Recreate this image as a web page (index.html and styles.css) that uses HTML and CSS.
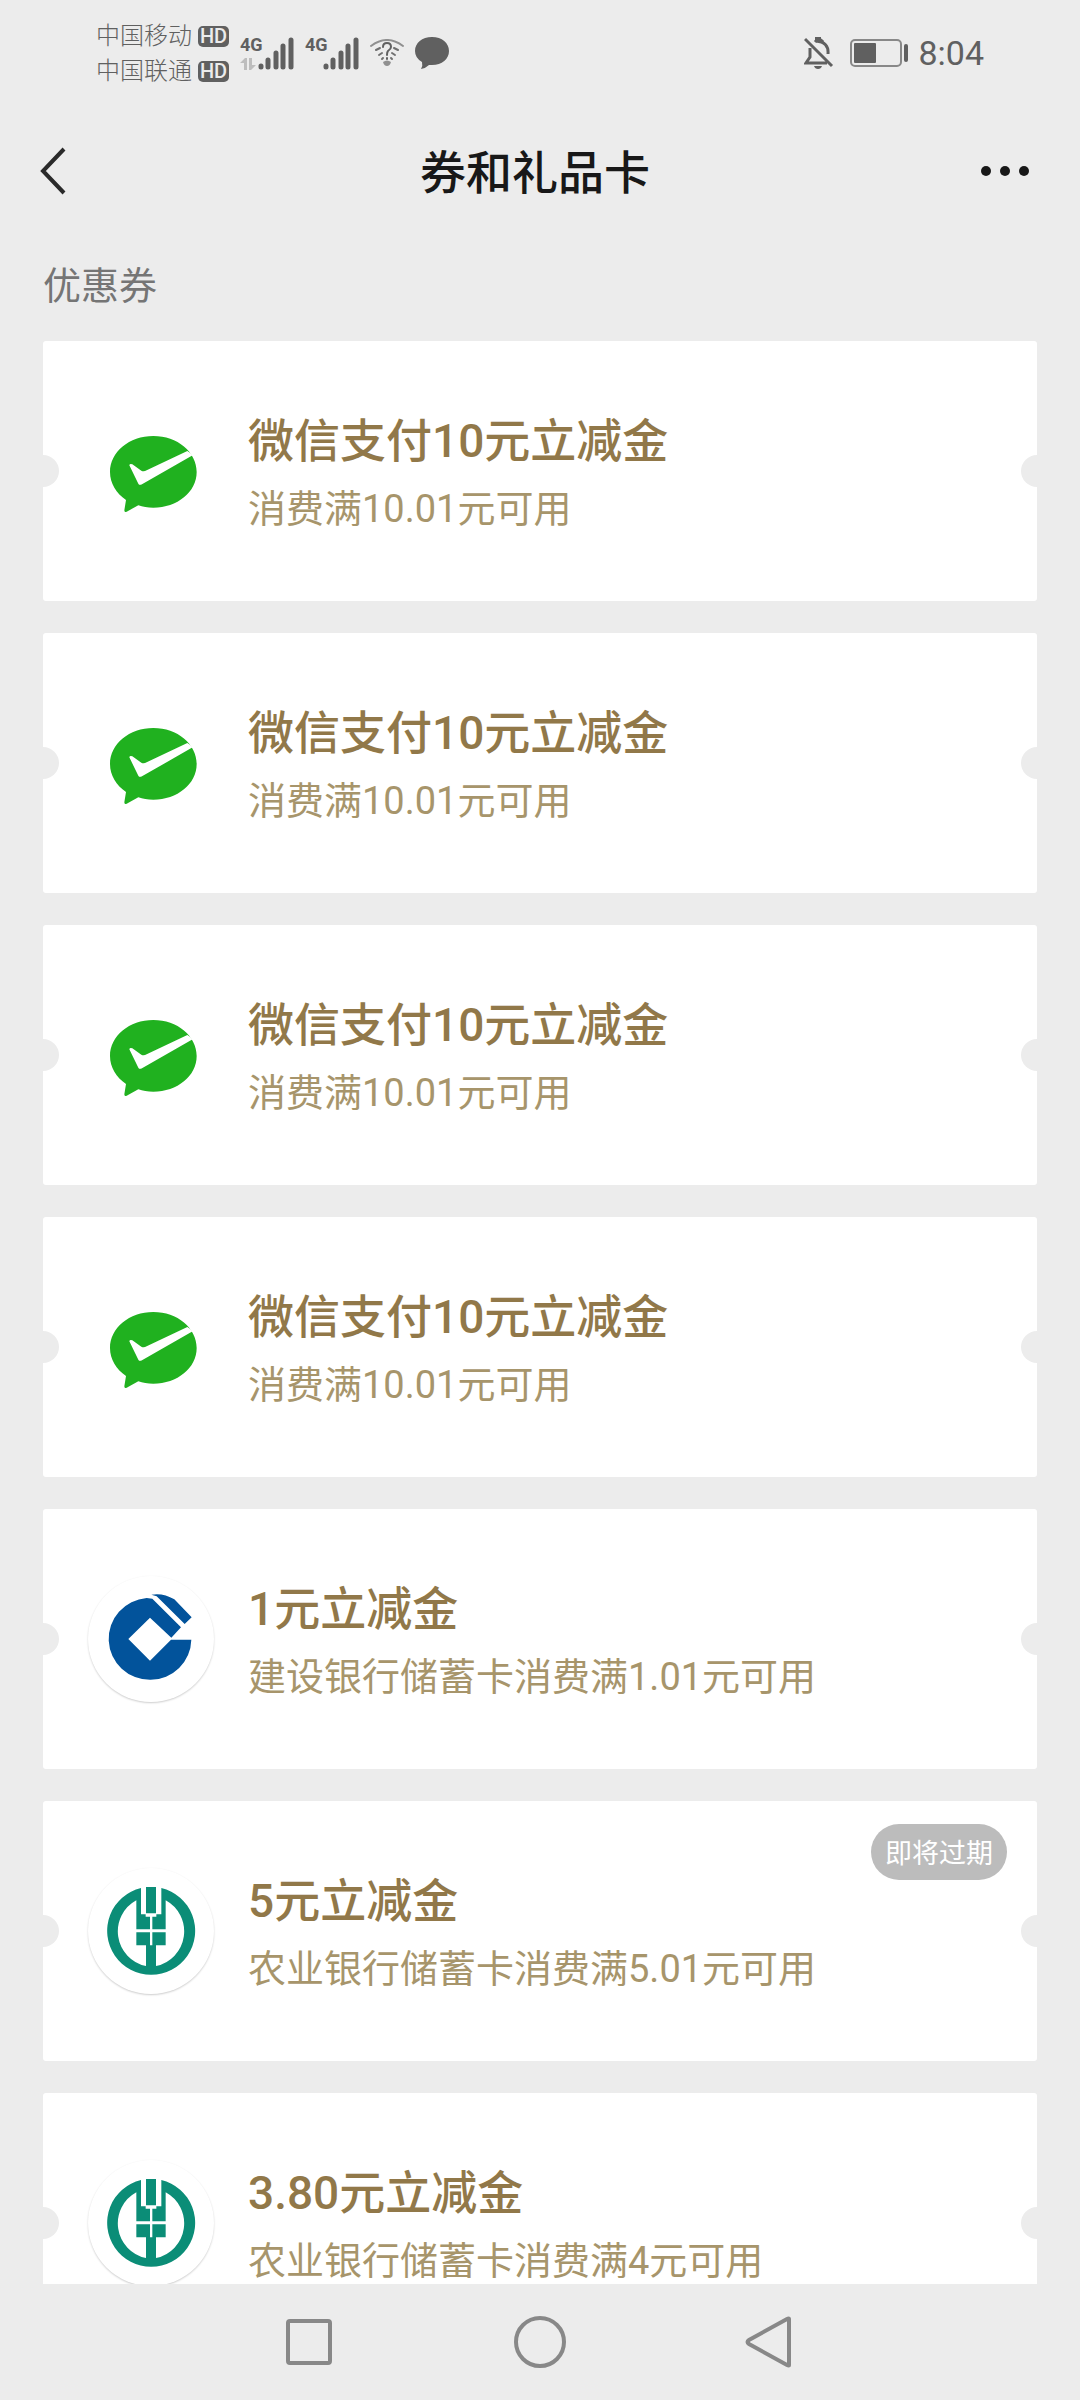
FILE: index.html
```html
<!DOCTYPE html>
<html lang="zh-CN">

<head>
    <meta charset="UTF-8">
    <meta name="viewport" content="width=device-width, initial-scale=1.0">
    <title>券和礼品卡</title>
    <link rel="stylesheet" href="styles.css">
</head>

<body>
    <!-- Shared logos -->
    <svg class="sprite" aria-hidden="true">
        <symbol id="logo-wechat" viewBox="174 234 378 378">
            <path fill="#20b11f" d="M370 318C442 318 500 366 500 426S442 533 370 533C353 533 338 530 325 526L290 545Q283 549 283 541L288 510C259 490 240 460 240 426C240 366 298 318 370 318Z" />
            <path fill="#fff" d="M298 406Q299 400 307 403L334 422Q341 426 350 421L472 363Q482 368 488 376L336 463Q328 467 325 461Z" />
        </symbol>
        <symbol id="logo-ccb" viewBox="24 21 378 378">
            <path fill="#02539b" d="M200 87L217 89L303 175L274 206L210 146L145 210L210 275L273 212H334A124 123 0 1 1 200 87Z" />
            <path fill="#02539b" d="M214 77Q250 71 283 91L335 145L314 165L230 82Z" />
        </symbol>
        <symbol id="logo-abc" viewBox="24 24 378 378">
            <path fill="#0b8d77" d="M183 84V163H197V170H210V208H169V121A106 106 0 0 0 198 318V256H169V217H210V256H217V217H257V256H228V318A106 106 0 0 0 257 121V208H217V170H229V163H244V84A132 132 0 1 1 183 84Z" />
            <path fill="#0b8d77" d="M198 81H228V160H198Z" />
        </symbol>
        <symbol id="signal-bars" viewBox="0 0 36 34">
            <path fill="none" stroke="#606060" stroke-width="5" stroke-linecap="round" d="M3 30V31M10 24V31M18 17V31M25 10V31M33 4V31" />
        </symbol>
    </svg>

    <div class="status-bar">
        <div class="carriers">
            <div class="carrier">中国移动<span class="hd">HD</span></div>
            <div class="carrier">中国联通<span class="hd">HD</span></div>
        </div>
        <div class="signal">
            <div class="network">
                <span>4G</span>
                <svg width="16" height="12" viewBox="0 0 16 12">
                    <path fill="#bdbdbd" d="M0 5L5 0H7V12H4V5ZM9 0H12V7H16L11 12H9Z" />
                </svg>
            </div>
            <svg width="36" height="34"><use href="#signal-bars" /></svg>
        </div>
        <div class="signal">
            <div class="network"><span>4G</span></div>
            <svg width="36" height="34"><use href="#signal-bars" /></svg>
        </div>
        <svg class="wifi" width="36" height="28" viewBox="0 0 36 28" fill="none" stroke-linecap="round">
            <path stroke="#909090" stroke-width="2" d="M2 7Q18 -5 34 7" />
            <path stroke="#707070" stroke-width="2" d="M7 11L11 9M25 9L29 11M10 16L13 14M23 14L26 16M13 20L14 19M22 19L23 20" />
            <path stroke="#606060" stroke-width="2" d="M14 8Q14 4 18 4T22 8Q22 10 19 12Q18 13 18 16M18 19V20" />
            <path fill="#909090" d="M14 23Q18 20 22 23Q21 27 18 27T14 23Z" />
        </svg>
        <svg class="bubble" width="34" height="32" viewBox="0 0 34 32">
            <path fill="#606060" d="M17 0C27 0 34 6 34 14S27 28 17 28H14Q11 31 6 32Q8 29 7 25Q0 21 0 14C0 6 7 0 17 0Z" />
        </svg>
        <div class="status-right">
            <svg width="30" height="34" viewBox="0 0 30 34" fill="none" stroke="#606060" stroke-width="3">
                <path d="M1 3L28 30M6 12V21L2 27H23M11 6Q15 1 19 6M12 5Q25 6 24 18" />
                <path fill="#606060" stroke="none" d="M11 1H17V5H11ZM10 30H18Q17 33 14 33T10 30Z" />
            </svg>
            <svg class="battery" width="58" height="28" viewBox="0 0 58 28">
                <rect x="1" y="1" width="50" height="26" rx="4" fill="none" stroke="#888" stroke-width="2" />
                <rect x="4" y="4" width="22" height="20" rx="1" fill="#606060" />
                <rect x="54" y="5" width="4" height="18" rx="2" fill="#606060" />
            </svg>
            <span class="time">8:04</span>
        </div>
    </div>

    <header class="header">
        <button class="icon-btn" aria-label="返回">
            <svg width="26" height="48" viewBox="0 0 26 48">
                <path fill="none" stroke="#2a2a2a" stroke-width="4" d="M24 2L3 24L24 46" />
            </svg>
        </button>
        <h1>券和礼品卡</h1>
        <button class="icon-btn more" aria-label="更多">
            <svg width="50" height="12" viewBox="0 0 50 12" fill="#181818">
                <circle cx="6" cy="6" r="5" />
                <circle cx="25" cy="6" r="5" />
                <circle cx="44" cy="6" r="5" />
            </svg>
        </button>
    </header>

    <main>
        <h2>优惠券</h2>
        <ul class="coupons">
            <li class="coupon">
                <svg class="logo"><use href="#logo-wechat" /></svg>
                <div class="info">
                    <h3>微信支付10元立减金</h3>
                    <p>消费满10.01元可用</p>
                </div>
            </li>
            <li class="coupon">
                <svg class="logo"><use href="#logo-wechat" /></svg>
                <div class="info">
                    <h3>微信支付10元立减金</h3>
                    <p>消费满10.01元可用</p>
                </div>
            </li>
            <li class="coupon">
                <svg class="logo"><use href="#logo-wechat" /></svg>
                <div class="info">
                    <h3>微信支付10元立减金</h3>
                    <p>消费满10.01元可用</p>
                </div>
            </li>
            <li class="coupon">
                <svg class="logo"><use href="#logo-wechat" /></svg>
                <div class="info">
                    <h3>微信支付10元立减金</h3>
                    <p>消费满10.01元可用</p>
                </div>
            </li>
            <li class="coupon">
                <svg class="logo bank"><use href="#logo-ccb" /></svg>
                <div class="info">
                    <h3>1元立减金</h3>
                    <p>建设银行储蓄卡消费满1.01元可用</p>
                </div>
            </li>
            <li class="coupon">
                <svg class="logo bank"><use href="#logo-abc" /></svg>
                <div class="info">
                    <h3>5元立减金</h3>
                    <p>农业银行储蓄卡消费满5.01元可用</p>
                </div>
                <span class="badge">即将过期</span>
            </li>
            <li class="coupon">
                <svg class="logo bank"><use href="#logo-abc" /></svg>
                <div class="info">
                    <h3>3.80元立减金</h3>
                    <p>农业银行储蓄卡消费满4元可用</p>
                </div>
            </li>
        </ul>
    </main>

    <nav class="system-nav">
        <button class="icon-btn" aria-label="最近任务">
            <svg width="52" height="52" viewBox="0 0 52 52">
                <rect x="4" y="5" width="42" height="42" rx="2" />
            </svg>
        </button>
        <button class="icon-btn" aria-label="主屏幕">
            <svg width="52" height="52" viewBox="0 0 52 52">
                <circle cx="26" cy="26" r="24" />
            </svg>
        </button>
        <button class="icon-btn" aria-label="后退">
            <svg width="52" height="52" viewBox="0 0 52 52">
                <path d="M45 3V49Q45 50 43 49L5 28Q2 26 5 24L43 3Q45 2 45 3Z" />
            </svg>
        </button>
    </nav>
</body>

</html>
```
FILE: styles.css
```css
* {
    box-sizing: border-box;
    margin: 0;
    padding: 0;
}

body {
    display: flex;
    flex-direction: column;
    height: 100vh;
    overflow: hidden;
    background-color: #ececec;
    color: #181818;
    font-family: Roboto, "Noto Sans CJK SC", sans-serif;
}

svg {
    display: block;
    flex-shrink: 0;
}

.sprite {
    position: absolute;
    width: 0;
    height: 0;
}

.icon-btn {
    background: none;
    border: none;
    cursor: pointer;
}

/* Status bar */
.status-bar {
    display: flex;
    align-items: center;
    height: 106px;
    padding: 0 96px;
    color: #606060;
}

.carriers {
    padding-top: 2px;
}

.carrier {
    display: flex;
    align-items: center;
    gap: 6px;
    font-size: 24px;
    font-weight: 300;
    line-height: 35px;
}

.hd {
    width: 31px;
    height: 21px;
    border-radius: 5px;
    background-color: #606060;
    color: #ececec;
    font-size: 20px;
    font-weight: 500;
    line-height: 21px;
    text-align: center;
}

.signal {
    display: flex;
    align-items: flex-end;
    margin-left: 11px;
}

.network {
    display: flex;
    flex-direction: column;
    justify-content: space-between;
    width: 18px;
    height: 34px;
    font-size: 18px;
    font-weight: 700;
    line-height: 18px;
}

.wifi {
    margin-left: 10px;
}

.bubble {
    margin-left: 10px;
}

.status-right {
    display: flex;
    align-items: center;
    margin-left: auto;
}

.battery {
    margin-left: 16px;
}

.time {
    margin-left: 10px;
    font-size: 34px;
}

/* Title bar */
.header {
    display: grid;
    grid-template-columns: 1fr auto 1fr;
    align-items: center;
    justify-items: start;
    height: 130px;
    padding: 0 50px 0 40px;
}

.header h1 {
    padding-top: 4px;
    font-size: 46px;
    font-weight: 500;
    line-height: 64px;
}

.more {
    justify-self: end;
}

main {
    flex: 1;
    min-height: 0;
    overflow: hidden;
    padding: 0 43px;
}

main h2 {
    height: 105px;
    color: #757575;
    font-size: 38px;
    font-weight: 400;
    line-height: 100px;
}

/* Coupons */
.coupons {
    display: flex;
    flex-direction: column;
    gap: 32px;
    list-style: none;
}

.coupon {
    position: relative;
    display: flex;
    flex-shrink: 0;
    align-items: center;
    gap: 34px;
    height: 260px;
    padding: 0 45px;
    border-radius: 3px;
    background-color: #fff;
    overflow: hidden;
}

/* Ticket notches on both edges */
.coupon::before,
.coupon::after {
    content: "";
    position: absolute;
    top: 114px;
    width: 32px;
    height: 32px;
    border-radius: 50%;
    background-color: #ececec;
}

.coupon::before {
    left: -16px;
}

.coupon::after {
    right: -16px;
}

.logo {
    width: 126px;
    height: 126px;
    border-radius: 50%;
}

.bank {
    box-shadow: 0 1px 2px rgba(0, 0, 0, 0.2);
}

.info {
    padding-top: 8px;
}

.info h3 {
    color: #917849;
    font-size: 46px;
    font-weight: 500;
    line-height: 68px;
}

.info p {
    color: #a7956b;
    font-size: 38px;
    line-height: 68px;
}

.badge {
    position: absolute;
    top: 23px;
    right: 30px;
    padding: 4px 14px 0;
    border-radius: 28px;
    background-color: #bcbcbc;
    color: #fff;
    font-size: 27px;
    line-height: 52px;
}

/* System navigation */
.system-nav {
    display: flex;
    align-items: center;
    justify-content: center;
    gap: 178px;
    height: 116px;
}

.system-nav svg {
    fill: none;
    stroke: #888;
    stroke-width: 4;
}
```
